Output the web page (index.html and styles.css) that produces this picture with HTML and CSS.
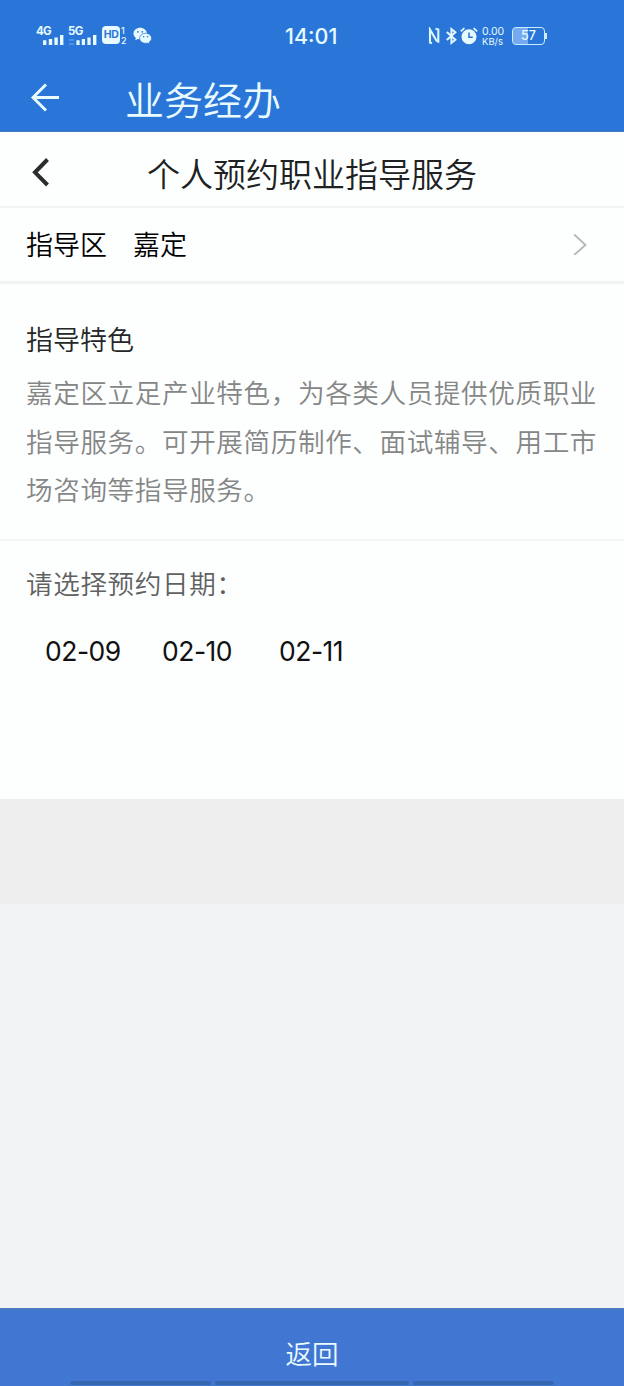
FILE: index.html
```html
<!DOCTYPE html>
<html lang="zh-CN">
<head>
<meta charset="utf-8">
<title>业务经办</title>
<link rel="stylesheet" href="styles.css">
</head>
<body>
<div class="screen">
  <header class="app-header">
    <div class="status-bar">
      <div class="status-left">
        <div class="signal">
          <span class="network">4G</span>
          <svg class="bars" width="21" height="10" viewBox="0 0 21 10"><path d="M0 5.200h3.400V10H0zM5.800 4h3.400v6H5.800zM11.400 2.400h3.400V10h-3.400zM17 0h3.400v10H17z" fill="#e6faff"/></svg>
        </div>
        <div class="signal signal-second">
          <span class="network">5G</span>
          <svg class="bars" width="28" height="10" viewBox="0 0 28 10"><path d="M0 4h5v2H0zM0 8h5v2H0z" fill="#4a94ee"/><path d="M7.400 5.200h3.200V10H7.400zM12.800 4H16v6h-3.200zM18.400 2.400h3.200V10h-3.200zM24 0h3.400v10H24z" fill="#e6faff"/></svg>
        </div>
        <span class="hd">HD</span>
        <span class="sims"><span>1</span><span>2</span></span>
        <svg class="wechat" width="19" height="18" viewBox="0 0 19 18">
          <path d="M7.200.8C3.400.8.5 3.300.5 6.500c0 1.800.9 3.300 2.400 4.400l-.7 2.300 2.600-1.300c.8.2 1.500.3 2.400.3 3.700 0 6.600-2.500 6.600-5.700S10.900.8 7.200.8z" fill="#e6faff"/>
          <path d="M12.500 6.300c-3.300 0-5.900 2.200-5.900 5s2.600 5 5.900 5c.7 0 1.400-.1 2-.3l2.200 1.200-.6-2c1.500-1 2.400-2.300 2.400-3.900 0-2.800-2.700-5-6-5z" fill="#e6faff" stroke="#2a76d8" stroke-width=".7"/>
          <g fill="#2a76d8"><circle cx="4.900" cy="4.800" r=".9"/><circle cx="9.300" cy="4.800" r=".9"/><circle cx="10.600" cy="9.800" r=".8"/><circle cx="14.500" cy="9.800" r=".8"/></g>
        </svg>
      </div>
      <div class="clock">14:01</div>
      <div class="status-right">
        <svg width="12" height="18" viewBox="0 0 12 18" fill="none" stroke="#d8f6ff" stroke-width="2.100"><path d="M4 16.200L2 15.500V2.500L9 14.500M7.500 1.800l2.800.7v13.300"/></svg>
        <svg class="bluetooth" width="11" height="18" viewBox="0 0 11 18" fill="none" stroke="#e6faff" stroke-width="1.900"><path d="M.8 5l8.600 7.800L5.400 16V2l4 3.300L.8 13"/></svg>
        <svg class="alarm" width="18" height="18" viewBox="0 0 18 18"><circle cx="9" cy="9.700" r="7.500" fill="#e6faff"/><path d="M.8 4.400L4.400 1.200M17.200 4.400l-3.600-3.200" stroke="#e6faff" stroke-width="1.800"/><path d="M9 5.500v4.700h3.800" fill="none" stroke="#2a76d8" stroke-width="1.500"/></svg>
        <span class="speed"><span class="speed-value">0.00</span><span>KB/s</span></span>
        <span class="battery">57</span>
      </div>
    </div>
    <div class="title-row">
      <svg width="30" height="30" viewBox="0 0 30 30" fill="none" stroke="#e9fbff" stroke-width="2.900"><path d="M29 14.500H3M16 1.500l-13 13 13 13"/></svg>
      <h1 class="app-title">业务经办</h1>
    </div>
  </header>

  <main class="content">
    <div class="page-bar">
      <svg class="page-back" width="20" height="30" viewBox="0 0 20 30" fill="none" stroke="#2b2c2d" stroke-width="4"><path d="M17.500 2.500L5 15.300 17.500 28"/></svg>
      <h2 class="page-title">个人预约职业指导服务</h2>
    </div>
    <div class="district-row">
      <span class="district-label">指导区</span>
      <span class="district-value">嘉定</span>
      <svg class="chevron" width="14" height="24" viewBox="0 0 14 24" fill="none" stroke="#b7b7b7" stroke-width="1.800"><path d="M1.200 3.500L12.500 14 1.200 24"/></svg>
    </div>
    <section class="feature">
      <h3 class="feature-title">指导特色</h3>
      <p class="feature-text">嘉定区立足产业特色，为各类人员提供优质职业<br>指导服务。可开展简历制作、面试辅导、用工市<br>场咨询等指导服务。</p>
    </section>
    <section class="booking">
      <div class="booking-label">请选择预约日期<span class="colon">：</span></div>
      <div class="dates">
        <span class="date">02-09</span>
        <span class="date">02-10</span>
        <span class="date">02-11</span>
      </div>
    </section>
  </main>
  <div class="spacer"></div>
  <footer class="footer">
    <span class="footer-label">返回</span>
    <div class="nav-lines"><i class="nav-line"></i><i class="nav-line nav-line-mid"></i><i class="nav-line"></i></div>
  </footer>
</div>
</body>
</html>
```
FILE: styles.css
```css
* { box-sizing: border-box; }
body {
  margin: 0;
  font-family: "Noto Sans CJK SC", sans-serif;
}
h1, h2, h3, p { margin: 0; font-weight: 400; }
svg { display: block; flex: none; }
.screen {
  width: 624px;
  height: 1386px;
  display: flex;
  flex-direction: column;
  background: #f1f3f5;
  overflow: hidden;
}
.app-header { height: 132px; background: #2a76d8; border-bottom: 1px solid #4277bd; color: #e9fbff; flex: none; }
.status-bar {
  height: 72px;
  display: grid;
  grid-template-columns: 285px 143px 1fr;
  align-items: center;
  font-family: Inter, sans-serif;
  color: #e6faff;
}
.status-left { display: flex; padding-left: 36px; height: 20px; }
.signal { width: 32px; height: 20px; display: flex; flex-direction: column; align-items: flex-start; }
.signal-second { width: 34px; }
.network { font-size: 11.5px; line-height: 10px; font-weight: 700; letter-spacing: -.7px; height: 9px; }
.bars { margin-left: 7px; }
.signal-second .bars { margin-left: 1px; }
.hd {
  width: 18px;
  height: 18px;
  background: #e6faff;
  color: #2a76d8;
  border-radius: 4px;
  font-size: 10.5px;
  line-height: 18px;
  font-weight: 700;
  text-align: center;
  letter-spacing: -.5px;
}
.sims { display: flex; flex-direction: column; width: 13px; padding-left: 1px; font-size: 9px; line-height: 10px; font-weight: 500; }
.wechat { margin-top: 1px; }
.clock { font-size: 21.5px; font-weight: 500; }
.status-right { display: flex; align-items: center; }
.bluetooth { margin-left: 6px; }
.alarm { margin-left: 3px; }
.speed { display: flex; flex-direction: column; margin-left: 4px; width: 24px; font-size: 9.5px; line-height: 9px; }
.speed-value { font-size: 10.5px; line-height: 10px; letter-spacing: -.1px; }
.battery {
  position: relative;
  margin-left: 6px;
  width: 33px;
  height: 18px;
  border: 1.5px solid #ccecff;
  border-radius: 4px;
  background: linear-gradient(90deg, #75aaf0 50%, transparent 50%);
  font-size: 12.5px;
  line-height: 16px;
  font-weight: 500;
  text-align: center;
}
.battery::after { content: ""; position: absolute; right: -3px; top: 5px; width: 2px; height: 6px; background: #ccecff; }
.title-row { height: 59px; padding: 0 30px 7px; display: flex; align-items: center; }
.app-title { margin-left: 65px; font-size: 39px; line-height: 52px; font-weight: 350; }

.content { height: 667px; flex: none; background: #fdfefe; }
.page-bar { height: 76px; display: flex; align-items: center; padding: 6px 30px 0; border-bottom: 2px solid #f2f4f4; }
.page-title { margin: 2px 0 0 97px; font-size: 33px; line-height: 44px; font-weight: 350; color: #202122; }
.page-back { height: 30px; }
.district-row { height: 76px; display: flex; align-items: center; padding: 0 37px 3px 26px; border-bottom: 3px solid #f2f4f4; font-size: 27px; font-weight: 350; color: #000; }
.district-value { margin-left: 26px; }
.chevron { margin-left: auto; }
.feature { height: 257px; padding: 35px 0 0 26px; border-bottom: 2px solid #f3f5f5; }
.feature-title { font-size: 27px; line-height: 40px; font-weight: 350; color: #252627; }
.feature-text { margin-top: 9px; font-size: 26.6px; letter-spacing: .6px; line-height: 48.500px; font-weight: 350; color: #858686; white-space: nowrap; }
.booking { padding: 22px 26px 0; }
.booking-label { font-size: 26.6px; letter-spacing: .6px; line-height: 40px; font-weight: 350; color: #606161; }
.dates { display: grid; grid-template-columns: repeat(3, 117px); margin-top: 30px; padding-left: 19px; font: 400 26.500px/36px Inter, sans-serif; letter-spacing: -.5px; color: #111; }
.spacer { height: 105px; flex: none; background: #eee; }
.footer {
  height: 78px;
  margin-top: auto;
  flex: none;
  background: #4177d2;
  border-top: 2px solid #4b7bc1;
  color: #e9fbff;
  display: flex;
  flex-direction: column;
  align-items: center;
  padding-top: 23px;
}
.footer-label { font-size: 26.500px; line-height: 40px; font-weight: 350; }
.nav-lines { display: flex; gap: 4px; margin-top: 8px; }
.nav-line { width: 141px; height: 4px; background: #3767ae; border-radius: 2px; }
.nav-line-mid { width: 194px; }
```
